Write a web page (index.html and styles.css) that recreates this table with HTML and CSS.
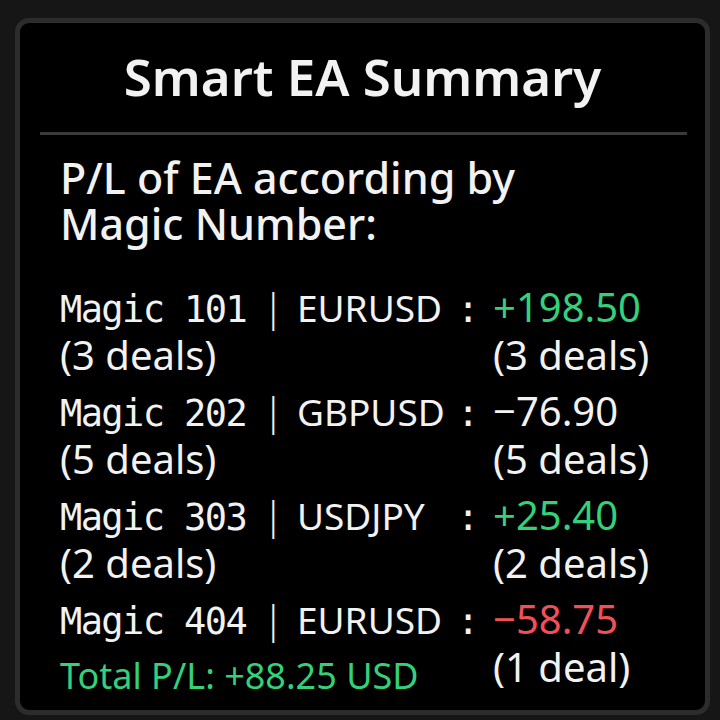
FILE: index.html
```html
<!DOCTYPE html>
<html>
<head>
<meta charset="utf-8">
<link rel="stylesheet" href="styles.css">
</head>
<body>
<div class="card">
  <h1 class="title">Smart EA Summary</h1>
  <div class="divider"></div>
  <div class="content">
    <h2 class="heading">P/L of EA according by<br>Magic Number:</h2>
    <div class="rows">
      <div class="label"><span class="mg">Magic 101</span><span class="bar">|</span><span class="sym">EURUSD</span><span class="col">:</span></div>
      <div class="value pos">+198.50</div>
      <div class="deals">(3 deals)</div>
      <div class="deals">(3 deals)</div>

      <div class="label"><span class="mg">Magic 202</span><span class="bar">|</span><span class="sym">GBPUSD</span><span class="col">:</span></div>
      <div class="value">−76.90</div>
      <div class="deals">(5 deals)</div>
      <div class="deals">(5 deals)</div>

      <div class="label"><span class="mg">Magic 303</span><span class="bar">|</span><span class="sym">USDJPY</span><span class="col">:</span></div>
      <div class="value pos">+25.40</div>
      <div class="deals">(2 deals)</div>
      <div class="deals">(2 deals)</div>

      <div class="label"><span class="mg">Magic 404</span><span class="bar">|</span><span class="sym">EURUSD</span><span class="col">:</span></div>
      <div class="value neg">−58.75</div>
      <div class="total">Total P/L: +88.25 USD</div>
      <div class="deals">(1 deal)</div>
    </div>
  </div>
</div>
</body>
</html>
```
FILE: styles.css
```css
html, body {
  margin: 0;
  padding: 0;
  background: #161616;
}
body {
  width: 720px;
  height: 720px;
  overflow: hidden;
}
.card {
  box-sizing: border-box;
  margin: 18px 0 0 15px;
  width: 695px;
  height: 697px;
  background: #000;
  border: 5px solid #2c2c2c;
  border-radius: 14px;
  color: #f2f2f2;
  font-family: "Noto Sans", "Open Sans", sans-serif;
}
.title {
  margin: 0;
  padding-top: 21px;
  text-align: center;
  font-size: 51px;
  font-weight: 600;
  line-height: 64px;
}
.divider {
  height: 3px;
  background: #3a3a3a;
  margin: 24px 18px 0 20px;
}
.content {
  padding: 20px 0 0 40px;
}
.heading {
  margin: 0;
  font-size: 43px;
  font-weight: 500;
  line-height: 46px;
}
.rows {
  display: grid;
  grid-template-columns: 419px auto;
  column-gap: 14px;
  margin-top: 26px;
  line-height: 52px;
}
.label {
  display: grid;
  grid-template-columns: 203px 18px 176px 22px;
  align-items: baseline;
  height: 52px;
  padding-top: 8px;
  font-family: "DejaVu Sans Mono", monospace;
  font-size: 37px;
  white-space: pre;
}
.mg {
  letter-spacing: -1.6px;
}
.bar {
  font-weight: 300;
  font-family: "Noto Sans", sans-serif;
  text-align: center;
  font-size: 38px;
}
.col {
  text-align: center;
}
.sym {
  padding-left: 16px;
  font-family: "Noto Sans", sans-serif;
  font-size: 37px;
}
.value {
  padding-top: 8px;
  font-size: 40px;
}
.deals {
  line-height: 44px;
  font-size: 40px;
}
.total {
  line-height: 44px;
  padding-top: 9px;
  font-size: 36px;
  color: #33d17a;
}
.pos { color: #33d17a; }
.neg { color: #f0505a; }
```
